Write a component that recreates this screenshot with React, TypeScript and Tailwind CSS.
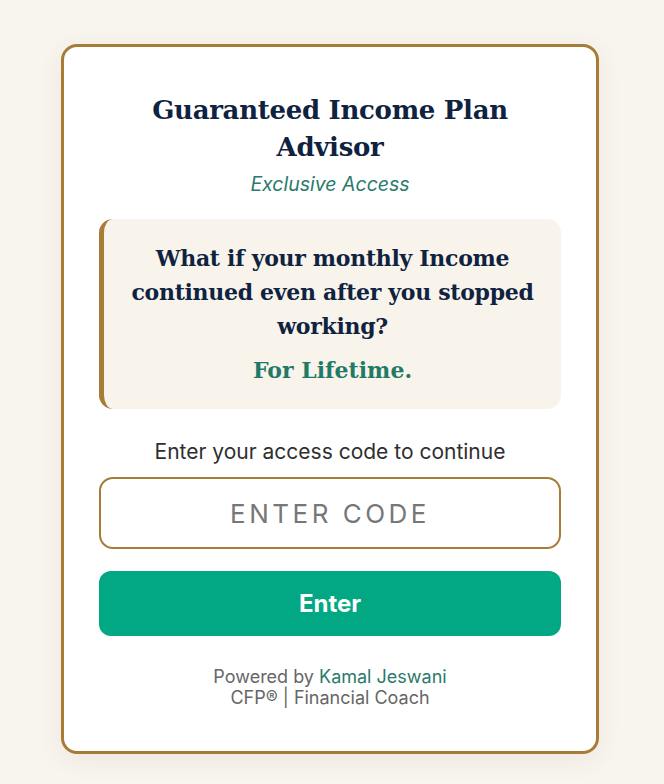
import React, { useState } from 'react';

const serif = { fontFamily: '"DejaVu Serif", "Liberation Serif", serif' };

export default function App() {
  const [code, setCode] = useState('');

  return (
    <div
      className="min-h-screen w-full bg-[#f8f4ee] flex justify-center pt-[44px] pr-[4px] pb-8"
      style={{ fontFamily: 'Inter, "Noto Sans", sans-serif' }}
    >
      <div className="w-[538px] h-[710px] bg-white border-[3px] border-[#a67c37] rounded-[16px] shadow-[0_6px_24px_rgba(120,100,60,0.08)] px-[35px] pt-[45px] flex flex-col items-center">
        <h1
          className="text-[#0f2340] text-[26px] leading-[37px] font-bold text-center px-8 tracking-[-0.3px]"
          style={serif}
        >
          Guaranteed Income Plan Advisor
        </h1>
        <p className="text-[#2b7a6b] italic text-[19.5px] leading-6 mt-[6px]">Exclusive Access</p>

        {/* highlight quote */}
        <div className="w-full mt-[23px] h-[190px] bg-[#f8f4ec] rounded-[14px] border-l-[5px] border-[#a67c37] flex flex-col items-center justify-center px-6">
          <p
            className="text-[#0f2340] text-[22px] leading-[34px] font-bold text-center tracking-[-0.3px]"
            style={serif}
          >
            What if your monthly Income continued even after you stopped working?
          </p>
          <p className="text-[#1f7a66] text-[22px] leading-[34px] font-bold mt-[10px]" style={serif}>
            For Lifetime.
          </p>
        </div>

        <p className="text-[#2f2f2f] text-[21px] leading-6 mt-[31px]">
          Enter your access code to continue
        </p>

        <input
          value={code}
          onChange={(e) => setCode(e.target.value)}
          placeholder="ENTER CODE"
          className="w-full h-[72px] mt-[13px] border-2 border-[#a67c37] rounded-[14px] text-center text-[26px] tracking-[3.5px] text-[#333] placeholder:text-[#777] outline-none"
        />

        <button className="w-full h-[65px] mt-[22px] bg-[#02a883] rounded-[12px] text-white text-[24px] font-bold">
          Enter
        </button>

        <div className="mt-[30px] text-center text-[18px] leading-[21px] text-[#666]">
          <p>
            Powered by <span className="text-[#2b7a6b]">Kamal Jeswani</span>
          </p>
          <p>CFP® | Financial Coach</p>
        </div>
      </div>
    </div>
  );
}
